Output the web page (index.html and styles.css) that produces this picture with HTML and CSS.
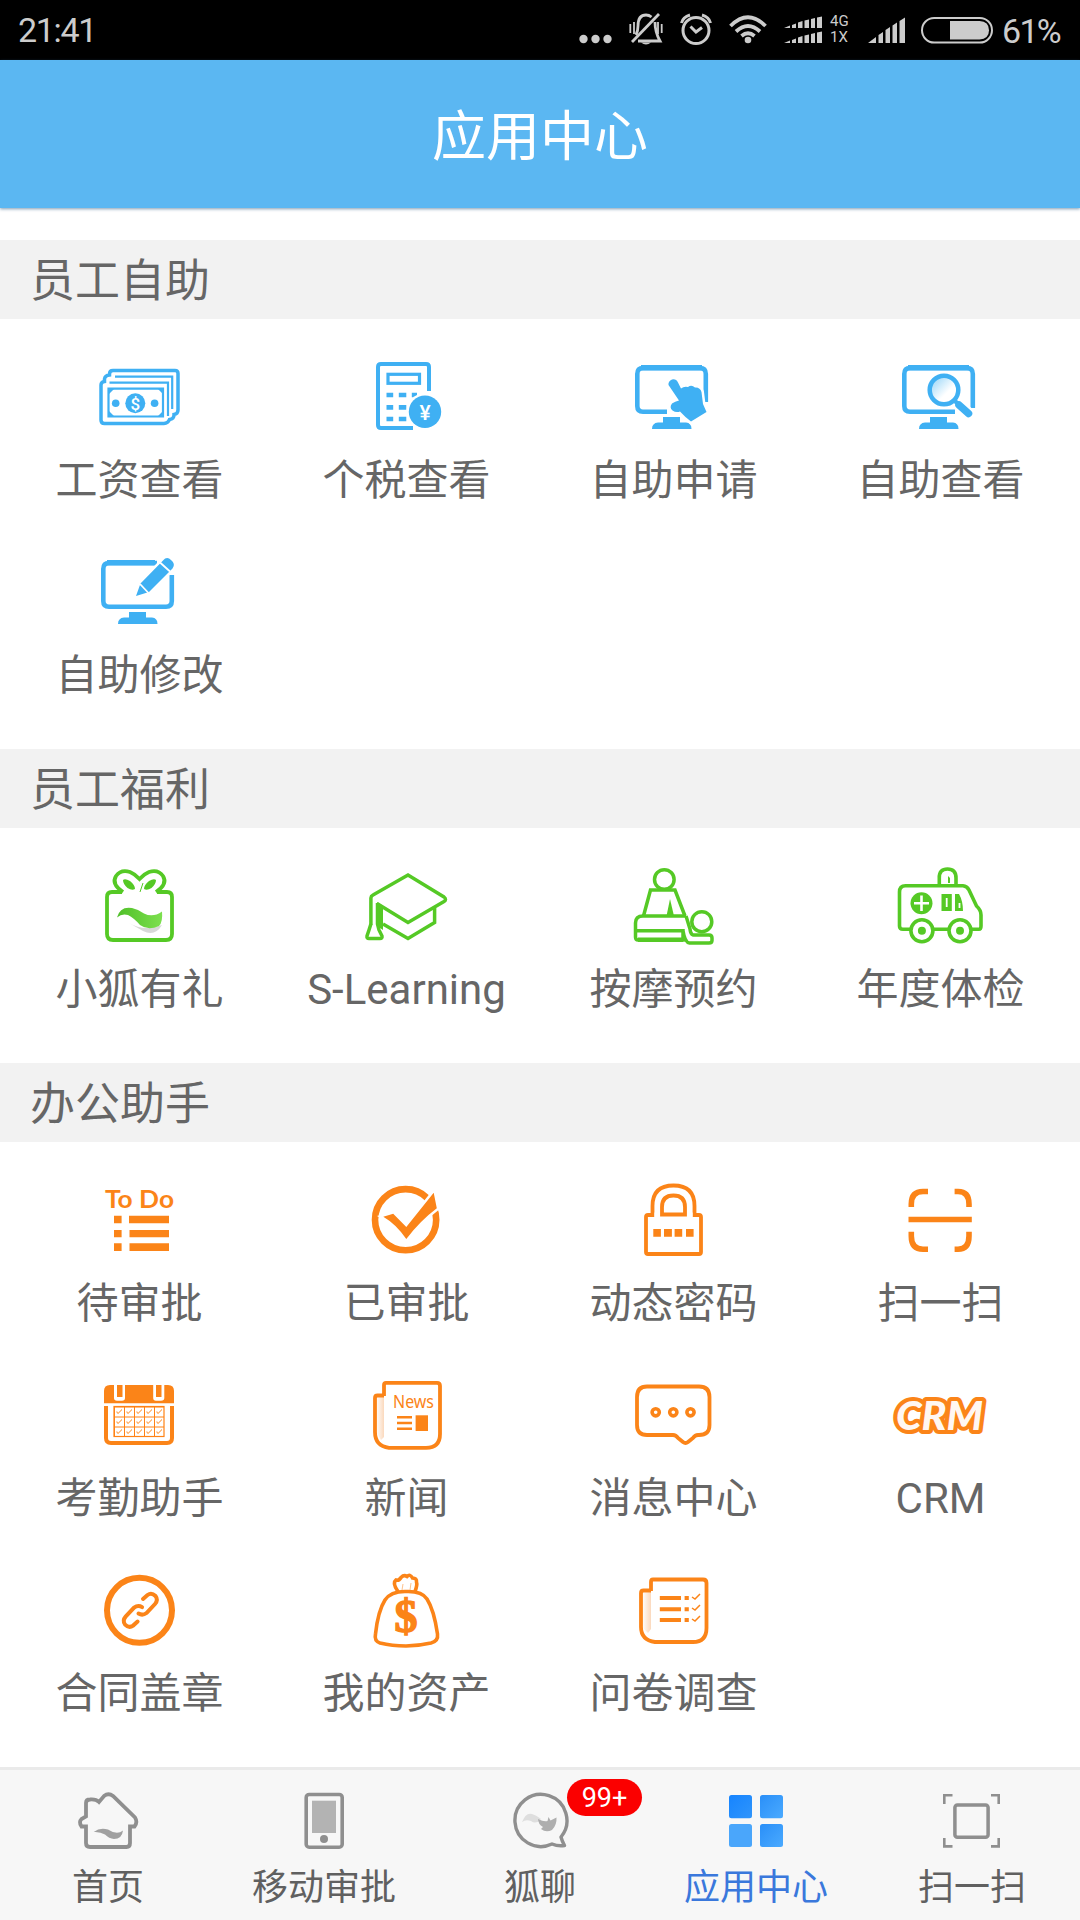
FILE: index.html
```html
<!DOCTYPE html>
<html lang="zh-CN">
<head>
<meta charset="utf-8">
<title>应用中心</title>
<link rel="stylesheet" href="styles.css">
</head>
<body>
<svg class="defs" aria-hidden="true">
  <defs>
    <g id="stand"><path d="M40 63H57V68.500H63Q68.500 69 68.500 75H29Q29 69 35 68.500H40Z"/></g>
    <linearGradient id="leaf" x1="0" x2="1"><stop offset="0" stop-color="#4fbf28"/><stop offset="1" stop-color="#7de04f"/></linearGradient>
    <linearGradient id="lens" x1="0" y1="0" x2="1" y2="1"><stop offset=".1" stop-color="#9bd7f8"/><stop offset=".6" stop-color="#fff"/></linearGradient>
    <linearGradient id="fold" x1="0" x2="1"><stop offset="0" stop-color="#fff"/><stop offset="1" stop-color="#fbd9bd"/></linearGradient>
    <linearGradient id="tileA" x1="0" y1="0" x2="1" y2="1"><stop offset="0" stop-color="#1684ff"/><stop offset="1" stop-color="#2f95fb"/></linearGradient>
    <linearGradient id="tileB" x1="0" y1="0" x2="1" y2="1"><stop offset="0" stop-color="#2a8ff8"/><stop offset="1" stop-color="#4aaaff"/></linearGradient>
    <pattern id="days" x="25" y="34.500" width="10" height="10" patternUnits="userSpaceOnUse"><path d="M0 .5H10M.5 0V10" class="hair"/><path d="M2.500 5L4 7L8 3" class="hair"/></pattern>
  </defs>
</svg>

<header class="status">
  <span class="clock">21:41</span>
  <div class="indicators">
    <svg width="33" height="60"><g fill="#ccc"><circle cx="4.500" cy="39" r="4.200"/><circle cx="16.500" cy="39" r="4.200"/><circle cx="28.500" cy="39" r="4.200"/></g></svg>
    <svg width="34" height="60" fill="none" stroke="#ccc" stroke-width="2.800"><path d="M7 35Q9 31 9 26Q9 15 17 15Q20 15 22.500 17M26 22Q26 32 31 41H9"/><path d="M3 42L30 14"/><path d="M1.300 24V33M5 22V34M29 22V34M32.700 24V33" stroke-width="1.800"/><path d="M12 42.500Q17 46.500 22 42.500Z" fill="#ccc" stroke="none"/></svg>
    <svg width="32" height="60" fill="none" stroke="#ccc" stroke-width="3"><circle cx="16" cy="30.500" r="13"/><path d="M10.500 26.500L16 32L22 27.500M1.500 23Q3 17 10 15M30.500 23Q29 17 22 15"/></svg>
    <svg width="38" height="60" fill="none" stroke="#ccc" stroke-width="3.800"><path d="M1.500 26Q19 8.500 36.500 26M7 31.500Q19 20.500 31 31.500M12.500 36Q19 30.500 25.500 36"/><circle cx="19" cy="40" r="3.300" fill="#ccc" stroke="none"/></svg>
    <div class="dual">
      <svg width="38" height="60" fill="#ccc"><path d="M0 28L6 25.500V28ZM8 25L12 23.500V28H8ZM14 22.500L18.500 21V28H14ZM20.500 20.500L25 19.500V28H20.500ZM27 19L31 18V28H27ZM33 17.500L38 16.500V28H33ZM0 43L6 40.500V43ZM8 40L12 38.500V43H8ZM14 37.500L18.500 36V43H14ZM20.500 35.500L25 34.500V43H20.500ZM27 34L31 33V43H27ZM33 32.500L38 31.500V43H33Z"/></svg>
      <span class="network"><span>4G</span><span>1X</span></span>
    </div>
    <svg width="38" height="60" fill="#ccc"><path d="M0 43L8 37V43ZM10.500 35L15 32V43H10.500ZM17.500 30L22 27V43H17.500ZM24.500 25.500L29 22.500V43H24.500ZM31.500 21L37 17.500V43H31.500Z"/></svg>
    <div class="battery">
      <svg width="72" height="60"><rect x="1" y="18" width="70" height="24.500" rx="12.200" fill="none" stroke="#ccc" stroke-width="2"/><path d="M29 21H58.500Q68 21.500 68 30.200T58.500 39.500H29Z" fill="#ccc"/></svg>
      <span class="percent">61%</span>
    </div>
  </div>
</header>

<h1 class="title">应用中心</h1>

<main class="content">
  <section class="group blue">
    <h2>员工自助</h2>
    <div class="grid">
      <a class="app">
        <svg viewBox="0 0 101 84" class="line">
          <path d="M12 66V31Q12 28 15.500 27.500V25Q16 21.500 20.500 21V20Q20.500 16.500 24 16.500H86Q89 16.500 89 19.500V56Q89 60 85 60.500V61Q85 65 80.500 65.500Q79 69.500 75 69.500H15.500Q12 69.500 12 66Z" stroke-width="3.500"/>
          <path d="M26 22.700H83.200V55M20.500 28.700H79V62" stroke-width="2.200"/>
          <path d="M19.500 34.700H74V62.500H19.500Z" stroke-width="2.200"/>
          <path d="M19 34H26L19 41ZM75 34H68L75 41ZM19 63V56L26 63ZM75 63V56L68 63Z" class="fill"/>
          <circle cx="46.300" cy="49.300" r="10" class="fill"/><circle cx="26.700" cy="49.300" r="3.800" class="fill"/><circle cx="65.600" cy="49.300" r="3.800" class="fill"/>
          <text x="46.300" y="55.500" class="sign" font-size="17">$</text>
        </svg>
        <span>工资查看</span>
      </a>
      <a class="app">
        <svg viewBox="0 0 101 84" class="line">
          <path d="M73 37V13Q73 10 70 10H25Q22 10 22 13V71Q22 74 25 74H57" stroke-width="4"/>
          <rect x="32" y="20.300" width="31.500" height="9" stroke-width="3.200"/>
          <path d="M30.500 38.700H37.200V43.300H30.500ZM42.800 38.700H50.300V43.300H42.800ZM55.800 38.700H61V43.300H55.800ZM30.500 51H37.200V55.700H30.500ZM42.800 51H50.300V55.700H42.800ZM30.500 62.700H37.200V67.300H30.500ZM42.800 62.700H50.300V67.300H42.800Z" class="fill"/>
          <circle cx="69" cy="57.700" r="18.500" class="blank"/><circle cx="69" cy="57.700" r="16.200" class="fill"/>
          <text x="69" y="65.500" class="sign" font-size="21">¥</text>
        </svg>
        <span>个税查看</span>
      </a>
      <a class="app">
        <svg viewBox="0 0 101 84" class="line">
          <path d="M44 57.700H20Q14.300 57.700 14.300 52V20Q14.300 14 20 14H77Q82.800 14 82.800 20V48" stroke-width="4.600"/><path d="M18 13.700H79" stroke-width="5.500"/>
          <use href="#stand" class="fill"/>
          <path d="M45.500 31Q45 27 49 25.500Q53 24.500 55 28.500L58 34.500Q61 32 65 33Q68.500 30.500 72 33.500Q77 33 78.500 38L80 50L83.500 58L68 67.500Q62 63 57 57.500Q53 59 49.500 56.500Q46 53.500 49 49.500Q52 47.500 56 46.500Z" class="fill halo"/>
        </svg>
        <span>自助申请</span>
      </a>
      <a class="app">
        <svg viewBox="0 0 101 84" class="line">
          <path d="M65 57.700H20Q14.300 57.700 14.300 52V20Q14.300 14 20 14H77Q82.800 14 82.800 20V54" stroke-width="4.600"/><path d="M18 13.700H79" stroke-width="5.500"/>
          <use href="#stand" class="fill"/>
          <path d="M68 50L79 60" class="gap" stroke-width="12" stroke-linecap="round"/>
          <path d="M64 46L68 50" stroke-width="4.500"/><path d="M69 51L78.500 59.500" stroke-width="7.500" stroke-linecap="round"/>
          <circle cx="54" cy="36" r="14.300" stroke-width="4.500" fill="url(#lens)"/>
        </svg>
        <span>自助查看</span>
      </a>
      <a class="app">
        <svg viewBox="0 0 101 84" class="line">
          <path d="M68 14H20Q14.300 14 14.300 20V52Q14.300 57.700 20 57.700H77Q82.800 57.700 82.800 52V26" stroke-width="4.600"/><path d="M18 13.700H66" stroke-width="5.500"/>
          <use href="#stand" class="fill"/>
          <path d="M47 47L51.500 34.500L74 11.500Q78 7 82 11Q87 15 83.500 19.500L60 43Z" class="fill halo"/>
          <path d="M51 35L59.500 44M71 13.500L81 22.500" class="gap" stroke-width="1.800"/>
        </svg>
        <span>自助修改</span>
      </a>
    </div>
  </section>

  <section class="group green">
    <h2>员工福利</h2>
    <div class="grid">
      <a class="app">
        <svg viewBox="0 0 101 84" class="line" stroke-width="3.800">
          <path d="M33 29H23Q18 29 18 34V71Q18 77 24 77H77Q83 77 83 71V34Q83 29 78 29H68"/>
          <path d="M34 29Q22 21 27 13Q32 6 41 9Q46 11 50.500 16Q55 11 60 9Q69 6 74 13Q79 21 67 29"/>
          <path d="M34 17Q36 15 41 18Q46 22 46 26Q43 28 38.500 25Q34 21 34 17ZM67 17Q65 15 60 18Q55 22 55 26Q58 28 62.500 25Q67 21 67 17Z" class="fill"/>
          <path d="M51 29L54 20" stroke-width="1"/>
          <path d="M40 60Q55 69 73 62Q66 74 54 68Z" fill="#d8d8d8" stroke="none"/>
          <path d="M28 54.500Q31 43 43 45Q49 46 55 50.500Q64 55 73 48.500Q74 59 70 63Q59 68 51 62Q45 55 39 52Q33 50 28 54.500Z" fill="url(#leaf)" stroke="none"/>
        </svg>
        <span>小狐有礼</span>
      </a>
      <a class="app">
        <svg viewBox="0 0 101 84" class="line" stroke-width="3.500">
          <path d="M14.900 62V35Q15 33 17 32L52 12L88 34Q91 36.500 88 38.500L52 59.500L21 40.500"/>
          <path d="M27 61L52 75.500L78.600 59.500V45"/>
          <path d="M21 39L27 43V67L21 63Z" class="fill"/>
          <path d="M14.900 61L13 67L11 73Q10.500 75.500 13 75.500H24Q26.500 75.500 26 73L23 67L21.500 61V40"/>
        </svg>
        <span>S-Learning</span>
      </a>
      <a class="app">
        <svg viewBox="0 0 101 84" class="line" stroke-width="3.500">
          <circle cx="41.300" cy="16.500" r="9.800"/><circle cx="78.800" cy="58.700" r="10"/>
          <path d="M20.500 53L27.500 27H52L62 53"/><path d="M47 36L43.500 53H51Z" class="fill"/>
          <path d="M63 53H20Q12.500 53 12.500 60V74Q12.500 77 15 77H60V67.700H12.500M60 67.700Q62 79.500 66.500 80H86Q89 80 89 77.500V75Q89 72 86 72H70Q67.500 71 67 66L63 53"/>
          <path d="M15 76.800H60" stroke-width="4.500"/>
        </svg>
        <span>按摩预约</span>
      </a>
      <a class="app">
        <svg viewBox="0 0 101 84" class="line" stroke-width="3.600">
          <path d="M21 66.300H13Q9.500 66.300 9.500 63V29Q9.500 22.700 15.500 22.700H73Q77 23 79 27L86.500 43Q91 47 91 52V63Q91 66.300 89 66.300H82M43 66.300H59"/>
          <path d="M49.300 23V15Q49 6 57.500 6Q66 6 66 15V23"/><path d="M58 13L60 15V20H58Z" class="fill"/>
          <circle cx="31.900" cy="67.700" r="11"/><circle cx="70" cy="67.700" r="11"/>
          <circle cx="31.900" cy="67.700" r="4" class="fill"/><circle cx="70" cy="67.700" r="4" class="fill"/>
          <circle cx="31.500" cy="40.300" r="11" class="fill"/><path d="M24 40.300H39M31.500 32.500V48" class="gap" stroke-width="2.600"/>
          <path d="M51.500 31H61.800V48H51.500ZM65 31H69Q73 38 73 48H65Z" class="fill"/><path d="M56.700 35V44M69.500 40V45" class="gap" stroke-width="1.800"/>
        </svg>
        <span>年度体检</span>
      </a>
    </div>
  </section>

  <section class="group orange">
    <h2>办公助手</h2>
    <div class="grid">
      <a class="app">
        <svg viewBox="0 0 101 84" class="line">
          <text x="16" y="30.500" class="ink" font-size="24" textLength="69" lengthAdjust="spacingAndGlyphs">To Do</text>
          <path d="M25 38.700H32.600V46.300H25ZM40 38.700H80V46.300H40ZM25 53H32.600V60.300H25ZM40.500 53H80V60.300H40.500ZM25 66.300H32.600V74H25ZM40.500 66.300H80V74H40.500Z" class="fill"/>
        </svg>
        <span>待审批</span>
      </a>
      <a class="app">
        <svg viewBox="0 0 101 84" class="line">
          <circle cx="49.600" cy="42.700" r="30.600" stroke-width="6.600"/>
          <path d="M27.300 39.700L37.200 36.800L50.300 50L77.700 15.700L80.800 31.300Q64 44 50.300 62Q40 47 27.300 39.700Z" class="fill halo"/>
        </svg>
        <span>已审批</span>
      </a>
      <a class="app">
        <svg viewBox="0 0 101 84" class="line" stroke-width="3.800">
          <path d="M29.500 38H25Q23 38 23 40V75Q23 77 25 77H76Q78 77 78 75V40Q78 38 76 38H71.500V29Q71.500 8.500 50.500 8.500T29.500 29Z"/><path d="M31.500 38H69.500" class="gap" stroke-width="5"/><path d="M39 37.500V30Q39 18.500 50.500 18.500T62 30V37.500Z"/>
          <path d="M30.300 52H37.900V59.700H30.300ZM41 52H48.900V59.700H41ZM51.600 52H59.200V59.700H51.600ZM63 52H70.600V59.700H63Z" class="fill"/>
        </svg>
        <span>动态密码</span>
      </a>
      <a class="app">
        <svg viewBox="0 0 101 84" class="line" stroke-width="5.600">
          <path d="M38 14.500H33Q21.300 14.500 21.300 27V30M64.600 14.500H68Q79 14.500 79 27V30M21.300 54.700V59Q21.300 72.200 33 72.200H38M79 54.700V59Q79 72.200 68 72.200H64.600M18.500 42.500H81.800"/>
        </svg>
        <span>扫一扫</span>
      </a>
      <a class="app">
        <svg viewBox="0 0 101 84" class="line">
          <path d="M17 34V66Q17 71 22 71H78Q83 71 83 66V34" stroke-width="4"/>
          <path d="M15 31.300V19Q15 13 21 13H79Q85 13 85 19V31.300Z" class="fill"/>
          <path d="M25 12H36V26Q36 28.700 33 28.700H28Q25 28.700 25 26ZM64.200 12H75.300V26Q75.300 28.700 72 28.700H67Q64.200 28.700 64.200 26Z" class="blank"/>
          <path d="M28 13H33.500V25H28ZM67 13H72.500V25H67Z" class="fill"/>
          <rect x="25" y="34.500" width="50" height="30" fill="url(#days)" stroke="#ff8214" stroke-width="1.200"/>
        </svg>
        <span>考勤助手</span>
      </a>
      <a class="app">
        <svg viewBox="0 0 101 84" class="line" stroke-width="3.800">
          <path d="M28 24V65L25 68L20 60V26Z" fill="url(#fold)" stroke="none"/>
          <path d="M28 24V13Q28 10.800 30 10.800H81Q84 10.800 84 14V62Q84 75.800 70 75.800H33Q19 74 19 60V26Q19 23.500 21.500 23.500H28"/>
          <text x="37" y="36" class="ink news" font-size="18.500" textLength="41" lengthAdjust="spacingAndGlyphs">News</text>
          <path d="M41 45.300H56M41 51H56M41 56.700H56" stroke-width="2.600"/><path d="M59.600 43.300H72V59H59.600Z" class="fill"/>
        </svg>
        <span>新闻</span>
      </a>
      <a class="app">
        <svg viewBox="0 0 101 84" class="line" stroke-width="3.800">
          <path d="M24 14.500H76Q86.500 14.500 86.500 25V53Q86.500 63 76 63H75Q72 63 70 66L65 70Q62.500 72 60 70L55 66Q53 63 50 63H24Q14 63 14 53V25Q14 14.500 24 14.500Z"/>
          <circle cx="32.700" cy="40.300" r="3.600" stroke-width="3.600"/><circle cx="50.300" cy="40.300" r="3.600" stroke-width="3.600"/><circle cx="67.500" cy="40.300" r="3.600" stroke-width="3.600"/>
        </svg>
        <span>消息中心</span>
      </a>
      <a class="app">
        <svg viewBox="0 0 101 84" class="line">
          <text x="6" y="57.500" class="crm" font-size="39" textLength="87" lengthAdjust="spacingAndGlyphs">CRM</text>
        </svg>
        <span>CRM</span>
      </a>
      <a class="app">
        <svg viewBox="0 0 101 84" class="line">
          <circle cx="50.500" cy="43.300" r="32.500" stroke-width="6"/>
          <g stroke-width="4" stroke-linecap="round"><path d="M54 32L58.500 28Q62.500 25 66.500 29Q69.500 33 66 37L57.500 46Q53.500 49 49.500 46.500"/><path d="M48.600 54.600L44.100 58.600Q40.100 61.600 36.100 57.600Q33.100 53.600 36.600 49.600L45.100 40.600Q49.100 37.600 53.100 40.100"/></g>
        </svg>
        <span>合同盖章</span>
      </a>
      <a class="app">
        <svg viewBox="0 0 101 84" class="line" stroke-width="3.600">
          <path d="M42 24.500Q36 16 40 13Q43 14 45 10.500Q48 7.500 51 9.500Q54 6.500 56.500 11Q61 11 60.500 15Q61.500 18 59 24.500"/>
          <path d="M46 23L47 17M54 23L55 16" stroke-width="1" opacity=".5"/>
          <path d="M50.500 24.500Q66 24 71 32Q78 43 81.500 67Q82.500 74 75 76Q62 79 50 79Q36 79 24 76Q18 74 19.500 67Q22 44 29 33Q35 24 50.500 24.500Z"/>
          <text x="50" y="65" class="ink money" font-size="46" text-anchor="middle">$</text>
        </svg>
        <span>我的资产</span>
      </a>
      <a class="app">
        <svg viewBox="0 0 101 84" class="line" stroke-width="3.800">
          <path d="M28 25V62L25 66L19 60V26Z" fill="url(#fold)" stroke="none"/>
          <path d="M28 24V15Q28 12.500 30 12.500H80Q83.500 12.500 83.500 16V61Q83.500 75 70 75H32Q18 73 18 60V26Q18 23.500 20.500 23.500H28"/>
          <path d="M36.800 31H58M61.600 31H65.800M36.800 42.300H58M61.600 42.300H65.800M36.800 53H58M61.600 53H65.800" stroke-width="4"/>
          <path d="M69 30L72 32L77 27M69 41L72 43L77 38M69 52L72 54L77 49" stroke-width="1.500"/>
        </svg>
        <span>问卷调查</span>
      </a>
    </div>
  </section>
</main>

<nav class="tabs">
  <a class="tab">
    <svg viewBox="0 0 72 62" class="line" stroke-width="3.800"><path d="M14 26.500V13Q14 9.500 18 9.500Q24 9 27 12L32 6Q36.500 2.500 41 6L63 27.500Q66 32 62.500 36.500H58V53Q58 57 54.500 57H18Q14 57 14 53V36.500H9.500Q6.500 32 9.500 29Z"/><path d="M21.700 42Q28 37 36 39.500Q45 45.500 51 40.500Q50 49 42 49Q37 48.500 33 44.500Q28 41.500 21.700 42Z" fill="#a0a0a0" stroke="none"/></svg>
    <span>首页</span>
  </a>
  <a class="tab">
    <svg viewBox="0 0 72 62" class="line" stroke-width="3.600"><rect x="18.200" y="4.500" width="36" height="52.700" rx="3"/><path d="M24 10.700H48V43H24Z" fill="#b3b3b3" stroke="none"/><circle cx="36" cy="49" r="4" class="fill"/></svg>
    <span>移动审批</span>
  </a>
  <a class="tab">
    <svg viewBox="0 0 72 62" class="line" stroke-width="3.400"><path d="M60.500 55.500Q58 51 57 47A26 26 0 1 0 48 54Q54 56.500 60.500 55.500Z" stroke-linejoin="round"/><path d="M18 32Q22 22 28 24Q32 25 37 29Q32 35 27 31Q22 29 18 32Z" fill="#dedede" stroke="none"/><path d="M34 29Q40 32 43.500 31L44.500 27L46.500 30.500L52.500 27.500Q53 35 48 40Q42 43 37 39L39 37Q34 34 34 29Z" fill="#aeaeae" stroke="none"/></svg>
    <span>狐聊</span>
    <b class="badge">99+</b>
  </a>
  <a class="tab active">
    <svg viewBox="0 0 72 62"><rect x="9" y="5" width="23" height="23.300" rx="2.500" fill="url(#tileA)"/><rect x="40" y="5" width="23" height="23.300" rx="2.500" fill="url(#tileB)"/><rect x="9" y="34" width="23" height="23" rx="2.500" fill="#4aa6fb"/><rect x="40" y="34" width="23" height="23" rx="2.500" fill="url(#tileB)"/></svg>
    <span>应用中心</span>
  </a>
  <a class="tab">
    <svg viewBox="0 0 72 62" class="line" stroke-width="2.600"><path d="M8.300 14V5.300H16.500M55 5.300H62.700V14M8.300 48V56.400H16.500M55 56.400H62.700V48"/><rect x="18.900" y="15" width="33.200" height="32.200" rx="2.500" stroke-width="3.500"/></svg>
    <span>扫一扫</span>
  </a>
</nav>
</body>
</html>
```

FILE: styles.css
```css
* { box-sizing: border-box; }

body {
  margin: 0;
  width: 1080px;
  height: 1920px;
  display: flex;
  flex-direction: column;
  overflow: hidden;
  background: #fff;
  color: #666;
  font-family: Roboto, "Noto Sans CJK SC", sans-serif;
}

svg { display: block; }
.defs { position: absolute; width: 0; height: 0; }

/* status bar */
.status {
  display: flex;
  justify-content: space-between;
  align-items: center;
  flex: none;
  height: 60px;
  padding: 0 18px;
  background: #000;
  color: #ccc;
  font-size: 34px;
  line-height: 62px;
}
.clock { letter-spacing: -1.3px; }
.percent { width: 60px; font-size: 34px; letter-spacing: -1.7px; }
.indicators { display: flex; gap: 17px; height: 60px; }
.dual { display: flex; gap: 8px; }
.network {
  display: flex;
  flex-direction: column;
  gap: 1px;
  width: 21px;
  padding-top: 14px;
  font-size: 15px;
  line-height: 15px;
}
.battery { display: flex; gap: 9px; margin-left: -2px; }

.title {
  flex: none;
  height: 148px;
  margin: 0;
  background: #5bb7f2;
  box-shadow: 0 1px 3px rgba(40, 90, 130, .6);
  color: #fff;
  font-size: 54px;
  font-weight: 400;
  line-height: 156px;
  text-align: center;
}

/* app groups */
.content { flex: none; padding-top: 32px; }
.group { padding-bottom: 40px; }
.group h2 {
  height: 79px;
  margin: 0;
  padding-left: 30px;
  background: #f2f2f2;
  font-size: 45px;
  font-weight: 400;
  line-height: 83px;
}
.grid {
  display: grid;
  grid-template-columns: repeat(4, 267px);
  grid-auto-rows: 195px;
  padding: 0 6px;
}
.app {
  display: flex;
  flex-direction: column;
  align-items: center;
  padding-top: 35px;
}
.app svg { width: 101px; height: 84px; margin-bottom: 13px; }
.app span { font-size: 42px; line-height: 60px; white-space: nowrap; }

.blue { --tone: #3fb0f3; }
.green { --tone: #55c925; }
.orange { --tone: #fb8418; }

.line { fill: none; stroke: var(--tone); }
.line .fill { fill: var(--tone); stroke: none; }
.line .blank { fill: #fff; stroke: none; }
.line .gap { stroke: #fff; }
.line .halo { stroke: #fff; stroke-width: 5px; paint-order: stroke; }
.hair { fill: none; stroke: #ff8214; stroke-width: 1; }
.line text { stroke: none; }
.sign { fill: #fff; font-weight: 500; text-anchor: middle; }
.ink { fill: var(--tone); font-family: Lato, sans-serif; font-weight: 700; }
.news { font-family: "Noto Sans", sans-serif; font-weight: 400; }
.line .money {
  stroke: var(--tone);
  stroke-width: 1.5px;
  font-family: "Liberation Serif", serif;
}
.line .crm {
  fill: #fff7f2;
  stroke: var(--tone);
  stroke-width: 8px;
  stroke-linejoin: round;
  paint-order: stroke;
  font-family: Lato, sans-serif;
  font-style: italic;
  font-weight: 900;
}

/* bottom tabs */
.tabs {
  --tone: #8f8f8f;
  display: flex;
  flex: 1;
  border-top: 3px solid #eaeaea;
  background: #f7f7f7;
}
.tab {
  position: relative;
  display: flex;
  flex: 1;
  flex-direction: column;
  align-items: center;
  padding-top: 20px;
  color: #606060;
  font-size: 36px;
  line-height: 48px;
}
.tab svg { width: 72px; height: 62px; margin-bottom: 12px; }
.tab.active { color: #3a78dc; }
.badge {
  position: absolute;
  top: 9px;
  left: 135px;
  width: 75px;
  height: 37px;
  border-radius: 19px;
  background: #fb0000;
  color: #fff;
  font-size: 27px;
  font-weight: 400;
  line-height: 39px;
  text-align: center;
}
```
